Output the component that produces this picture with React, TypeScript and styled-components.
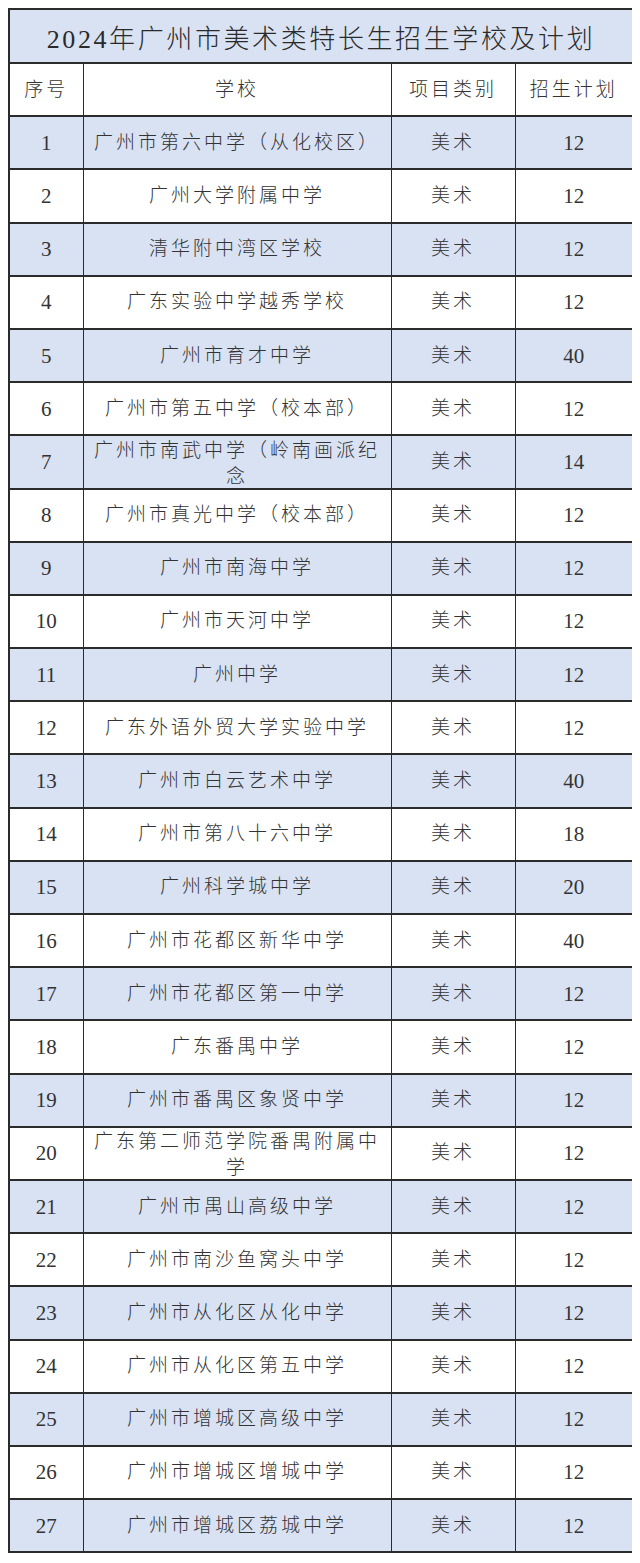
import React from "react";
import styled, { createGlobalStyle } from "styled-components";

const rows: [string, number][] = [
  ["广州市第六中学（从化校区）", 12],
  ["广州大学附属中学", 12],
  ["清华附中湾区学校", 12],
  ["广东实验中学越秀学校", 12],
  ["广州市育才中学", 40],
  ["广州市第五中学（校本部）", 12],
  ["广州市南武中学（岭南画派纪念", 14],
  ["广州市真光中学（校本部）", 12],
  ["广州市南海中学", 12],
  ["广州市天河中学", 12],
  ["广州中学", 12],
  ["广东外语外贸大学实验中学", 12],
  ["广州市白云艺术中学", 40],
  ["广州市第八十六中学", 18],
  ["广州科学城中学", 20],
  ["广州市花都区新华中学", 40],
  ["广州市花都区第一中学", 12],
  ["广东番禺中学", 12],
  ["广州市番禺区象贤中学", 12],
  ["广东第二师范学院番禺附属中学", 12],
  ["广州市禺山高级中学", 12],
  ["广州市南沙鱼窝头中学", 12],
  ["广州市从化区从化中学", 12],
  ["广州市从化区第五中学", 12],
  ["广州市增城区高级中学", 12],
  ["广州市增城区增城中学", 12],
  ["广州市增城区荔城中学", 12],
];

const GlobalStyle = createGlobalStyle`
  body {
    margin: 8px;
    background: #fff;
    font-family: "Liberation Serif", "Noto Sans CJK SC", serif;
    color: #333;
  }
`;

const Table = styled.table`
  width: 624px;
  border-collapse: collapse;
  table-layout: fixed;
  border: 2px solid #2b2b2b;
`;

const TitleCell = styled.th`
  height: 52px;
  background: #d9e2f3;
  font-size: 26px;
  font-weight: 300;
  letter-spacing: 2.6px;
  border-bottom: 2px solid #2b2b2b;
  padding: 0;
  color: #2a2a2a;
`;

const Row = styled.tr<{ $blue?: boolean }>`
  height: 53.2px;
  background: ${(p) => (p.$blue ? "#d9e2f3" : "#fff")};
`;

const Cell = styled.td<{ $num?: boolean }>`
  padding: 0 4px;
  text-align: center;
  vertical-align: middle;
  border: 1.5px solid #2b2b2b;
  border-top-width: 2px;
  font-size: ${(p) => (p.$num ? "21px" : "19px")};
  font-weight: 300;
  letter-spacing: ${(p) => (p.$num ? "0" : "3px")};
  line-height: 26px;
`;

const Wrap = styled.div`
  max-height: 48px;
  overflow: hidden;
`;

export default function App() {
  return (
    <>
      <GlobalStyle />
      <Table>
        <colgroup>
          <col style={{ width: 74 }} />
          <col style={{ width: 308 }} />
          <col style={{ width: 124 }} />
          <col style={{ width: 118 }} />
        </colgroup>
        <thead>
          <tr>
            <TitleCell colSpan={4}>2024年广州市美术类特长生招生学校及计划</TitleCell>
          </tr>
        </thead>
        <tbody>
          <Row>
            <Cell>序号</Cell>
            <Cell>学校</Cell>
            <Cell>项目类别</Cell>
            <Cell>招生计划</Cell>
          </Row>
          {rows.map(([name, n], i) => (
            <Row key={i} $blue={i % 2 === 0}>
              <Cell $num>{i + 1}</Cell>
              <Cell>
                <Wrap>{name}</Wrap>
              </Cell>
              <Cell>美术</Cell>
              <Cell $num>{n}</Cell>
            </Row>
          ))}
        </tbody>
      </Table>
    </>
  );
}
